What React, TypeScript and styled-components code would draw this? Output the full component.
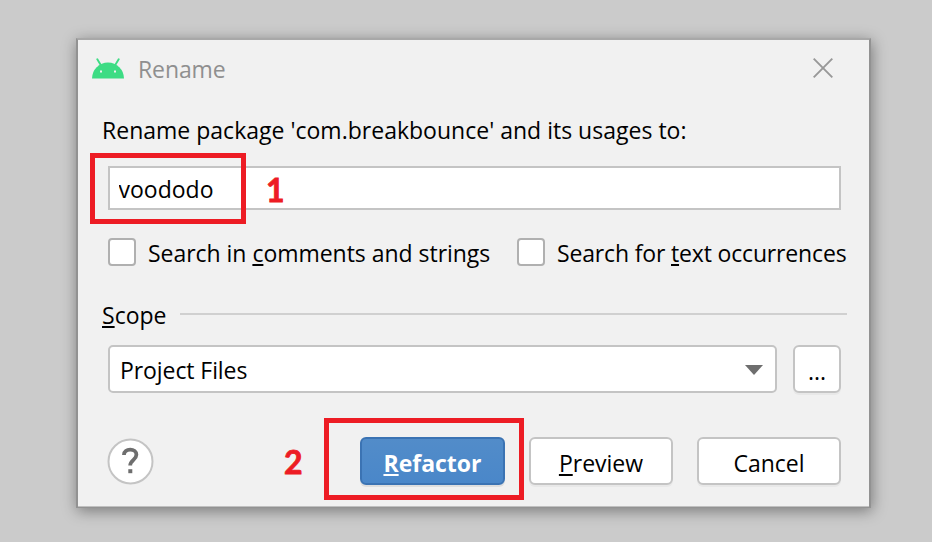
import React from "react";
import styled, { createGlobalStyle } from "styled-components";

const GlobalStyle = createGlobalStyle`
  * { box-sizing: border-box; }
  body {
    margin: 0;
    background: #cbcbcb;
    font: 23px/32px "Open Sans", "Noto Sans", sans-serif;
    color: #000;
  }
  button, input { font: inherit; color: inherit; }
`;

const Desktop = styled.main`
  height: 542px;
  padding: 38px 0 0 76px;
  overflow: hidden;
  background: #cbcbcb;
`;

const Dialog = styled.section`
  position: relative;
  display: flex;
  flex-direction: column;
  width: 795px;
  height: 470px;
  padding: 12px 28px 0 30px;
  background: #f1f1f1;
  border: 2px solid #929292;
  border-top-color: #a8a8a8;
  border-bottom-width: 1px;
  box-shadow: 1px 3px 14px rgba(0, 0, 0, 0.4), inset 0 -1px 0 #c0c0c0;
`;

const TitleBar = styled.header`
  display: flex;
  align-items: center;
  height: 32px;
  margin: 0 8px 0 -16px;
`;

const Title = styled.h1`
  flex: 1;
  margin: 2px 0 0 14px;
  font-size: 23px;
  font-weight: 400;
  letter-spacing: -0.1px;
  color: #8f8f8f;
`;

const CloseButton = styled.button`
  display: flex;
  padding: 0;
  border: 0;
  background: none;
`;

const Prompt = styled.label`
  margin: 30px 0 0 -6px;
  letter-spacing: 0.01px;
  white-space: nowrap;
`;

const NameInput = styled.input`
  height: 44px;
  margin-top: 20px;
  padding: 2px 8px 0 8.5px;
  background: #fff;
  border: 2px solid #c4c4c4;
  border-radius: 0;
  outline: none;
`;

const Options = styled.div`
  display: grid;
  grid-template-columns: 409px 1fr;
  margin-top: 26px;
`;

const Option = styled.label<{ $tracking: string }>`
  display: flex;
  align-items: center;
  height: 32px;
  gap: 12px;
  white-space: nowrap;
  letter-spacing: ${(p) => p.$tracking};
`;

const OptionText = styled.span`
  padding-top: 2px;
`;

const CheckBox = styled.span`
  flex: none;
  width: 28px;
  height: 28px;
  margin-top: -1px;
  background: #fff;
  border: 2px solid #b0b0b0;
  border-radius: 4px;
`;

const Mnemonic = styled.span`
  text-decoration: underline;
  text-decoration-thickness: 2px;
  text-underline-offset: 2px;
  text-decoration-skip-ink: none;
`;

const ScopeHeader = styled.div`
  display: flex;
  align-items: center;
  gap: 14px;
  height: 32px;
  margin: 30px -6px 0 -6px;

  &::after {
    content: "";
    flex: 1;
    height: 2px;
    background: #d0d0d0;
  }
`;

const ScopeLabel = styled.span`
  width: 64px;
  padding-top: 1px;
`;

const ScopeRow = styled.div`
  display: grid;
  grid-template-columns: 669px 48px;
  gap: 16px;
  margin-top: 15px;
`;

const Select = styled.div`
  display: flex;
  align-items: center;
  justify-content: space-between;
  height: 48px;
  padding: 2px 12px 0 10px;
  background: #fff;
  border: 2px solid #c4c4c4;
  border-radius: 5px;
  letter-spacing: -0.08px;
`;

const Button = styled.button<{ $primary?: boolean }>`
  height: 48px;
  padding: 3px 0 0;
  border: 2px solid ${(p) => (p.$primary ? "#3b73b3" : "#c4c4c4")};
  border-radius: 6px;
  background: ${(p) => (p.$primary ? "linear-gradient(#528cc9, #4a87c9)" : "#fff")};
  color: ${(p) => (p.$primary ? "#fff" : "#000")};
  font-weight: ${(p) => (p.$primary ? 700 : 400)};
  line-height: 32px;
  box-shadow: 0 2px 0 ${(p) => (p.$primary ? "#dedede" : "#e8e8e8")};
`;

const ActionBar = styled.div`
  display: flex;
  align-items: flex-start;
  margin-top: 44px;
`;

const Actions = styled.div`
  display: grid;
  grid-template-columns: 145px 144px 144px;
  gap: 24px;
  margin-left: auto;
`;

const HelpButton = styled.button`
  display: flex;
  margin: 1px 0 0 -1px;
  padding: 0;
  border: 0;
  background: none;
`;

const Highlight = styled.div<{ $x: number; $y: number; $w: number; $h: number }>`
  position: absolute;
  left: ${(p) => p.$x}px;
  top: ${(p) => p.$y}px;
  width: ${(p) => p.$w}px;
  height: ${(p) => p.$h}px;
  border: 5px solid #ed1c24;
  pointer-events: none;
`;

const StepNumber = styled.span<{ $x: number; $y: number }>`
  position: absolute;
  left: ${(p) => p.$x}px;
  top: ${(p) => p.$y}px;
  font: 700 32px/40px Lato, sans-serif;
  color: #ed1c24;
  -webkit-text-stroke: 0.8px #ed1c24;
`;

const AndroidIcon = () => (
  <svg width="32" height="21" viewBox="0 0 32 21" aria-hidden="true">
    <path d="M0 20.5a16 16 0 0 1 32 0z" fill="#3ddc84" />
    <path d="M5.3 1.3l3.6 6M26.7 1.3l-3.6 6" stroke="#3ddc84" strokeWidth="1.9" strokeLinecap="round" />
    <path d="M8 12.5h2v2H8zM22 12.5h2v2h-2z" fill="#f1f1f1" />
  </svg>
);

export default function App() {
  return (
    <>
      <GlobalStyle />
      <Desktop>
        <Dialog role="dialog" aria-label="Rename">
          <TitleBar>
            <AndroidIcon />
            <Title>Rename</Title>
            <CloseButton aria-label="Close">
              <svg width="20" height="20" viewBox="0 0 20 20">
                <path d="M.7.7l18.6 18.6M19.3.7L.7 19.3" stroke="#989898" strokeWidth="1.9" />
              </svg>
            </CloseButton>
          </TitleBar>
          <Prompt htmlFor="name">Rename package 'com.breakbounce' and its usages to:</Prompt>
          <NameInput id="name" defaultValue="voododo" />
          <Options>
            <Option $tracking="-0.03px">
              <CheckBox />
              <OptionText>Search in <Mnemonic>c</Mnemonic>omments and strings</OptionText>
            </Option>
            <Option $tracking="-0.16px">
              <CheckBox />
              <OptionText>Search for <Mnemonic>t</Mnemonic>ext occurrences</OptionText>
            </Option>
          </Options>
          <ScopeHeader>
            <ScopeLabel><Mnemonic>S</Mnemonic>cope</ScopeLabel>
          </ScopeHeader>
          <ScopeRow>
            <Select>
              Project Files
              <svg width="18" height="10" viewBox="0 0 18 10">
                <path d="M0 0h18L9 10z" fill="#6e6e6e" />
              </svg>
            </Select>
            <Button>...</Button>
          </ScopeRow>
          <ActionBar>
            <HelpButton aria-label="Help">
              <svg width="47" height="47" viewBox="0 0 47 47">
                <circle cx="23.5" cy="23.5" r="22" fill="#fff" stroke="#c4c4c4" strokeWidth="2" />
                <path d="M17 18.7v-.5c0-3.2 2.7-5 6.2-5s6.2 2 6.2 5.2c0 4.9-6.2 5.2-6.2 10.8" transform="translate(0 -1.6)" fill="none" stroke="#6e6e6e" strokeWidth="3.8" />
                <path d="M21.3 31.2h4v4h-4z" fill="#6e6e6e" />
              </svg>
            </HelpButton>
            <Actions>
              <Button $primary><Mnemonic>R</Mnemonic>efactor</Button>
              <Button><Mnemonic>P</Mnemonic>review</Button>
              <Button>Cancel</Button>
            </Actions>
          </ActionBar>
          <Highlight $x={12} $y={113} $w={156} $h={71} />
          <StepNumber $x={188} $y={130}>1</StepNumber>
          <Highlight $x={246} $y={378} $w={200} $h={82} />
          <StepNumber $x={206} $y={402}>2</StepNumber>
        </Dialog>
      </Desktop>
    </>
  );
}
